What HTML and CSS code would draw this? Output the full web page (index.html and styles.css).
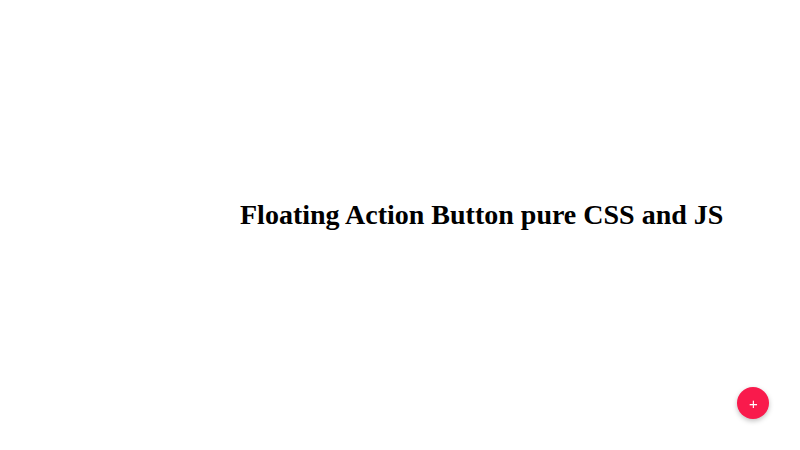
FILE: index.html
```html
<!DOCTYPE html>
<html>
<head>
<meta charset="utf-8">
<link rel="stylesheet" href="styles.css">
</head>
<body>
<main class="page">
  <h1 class="title">Floating Action Button pure CSS and JS</h1>
</main>
<button class="fab" type="button" aria-label="Add"><span class="fab-plus">+</span></button>
</body>
</html>
```
FILE: styles.css
```css
html, body {
  margin: 0;
  padding: 0;
  background: #ffffff;
}
body {
  font-family: "Liberation Serif", "Times New Roman", serif;
  width: 800px;
  height: 450px;
  overflow: hidden;
}
.page {
  box-sizing: border-box;
  height: 450px;
  display: flex;
  align-items: center;
  padding-left: 240px;
  padding-bottom: 20px;
}
.title {
  margin: 0;
  font-size: 28px;
  font-weight: bold;
  color: #000;
  line-height: 1.15;
}
.fab {
  position: fixed;
  right: 31px;
  bottom: 31px;
  width: 32px;
  height: 32px;
  border-radius: 50%;
  border: none;
  padding: 0;
  background: #f91a4c;
  box-shadow: 0 2px 5px rgba(0,0,0,0.25);
  display: flex;
  align-items: center;
  justify-content: center;
  color: #fff;
  font-family: "Liberation Sans", Arial, sans-serif;
  font-size: 15px;
  line-height: 1;
}
.fab-plus {
  display: block;
  margin-top: 0;
  margin-left: 1px;
}
```
